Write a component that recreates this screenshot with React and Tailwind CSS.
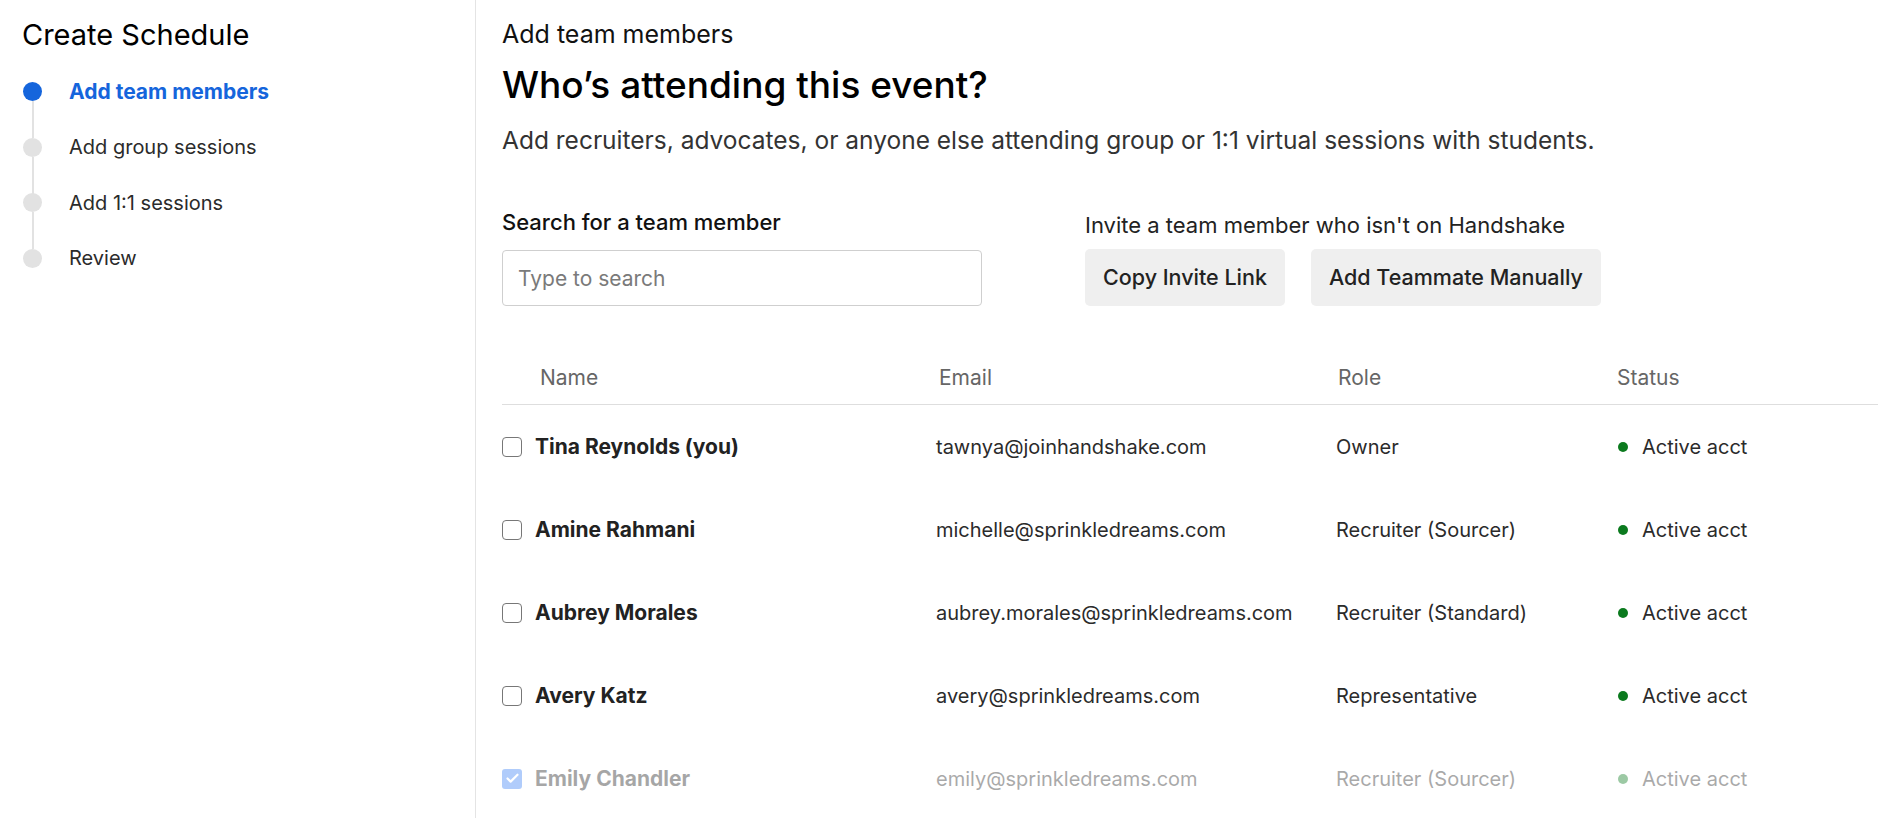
import { Check } from "lucide-react";

const steps = [
  { label: "Add team members", active: true },
  { label: "Add group sessions" },
  { label: "Add 1:1 sessions" },
  { label: "Review" },
];

const members = [
  { name: "Tina Reynolds (you)", email: "tawnya@joinhandshake.com", role: "Owner" },
  { name: "Amine Rahmani", email: "michelle@sprinkledreams.com", role: "Recruiter (Sourcer)" },
  { name: "Aubrey Morales", email: "aubrey.morales@sprinkledreams.com", role: "Recruiter (Standard)" },
  { name: "Avery Katz", email: "avery@sprinkledreams.com", role: "Representative" },
  { name: "Emily Chandler", email: "emily@sprinkledreams.com", role: "Recruiter (Sourcer)", added: true },
];

function Stepper() {
  return (
    <ol className="mt-[10px] pl-[23px]">
      {steps.map((s, i) => (
        <li key={s.label} className="flex h-[55.5px] items-center">
          <div className="relative flex w-[46px] shrink-0 items-center">
            <span
              className={`h-[19px] w-[19px] rounded-full ${s.active ? "bg-[#1565dc]" : "bg-[#e2e2e2]"}`}
            />
            {i < steps.length - 1 && (
              <span className="absolute left-[8.5px] top-[19px] h-[37px] w-[2px] bg-[#e2e2e2]" />
            )}
          </div>
          <span
            className={s.active ? "text-[21px] font-bold text-[#1565dc]" : "text-[20px] text-[#2b2b2b]"}
          >
            {s.label}
          </span>
        </li>
      ))}
    </ol>
  );
}

function Row({ m }) {
  return (
    <div
      className={`grid h-[83px] grid-cols-[434px_400px_281px_1fr] items-center text-[20px] ${m.added ? "opacity-40" : ""}`}
    >
      <div className="flex items-center gap-[13px]">
        {m.added ? (
          <span className="grid h-[20px] w-[20px] place-items-center rounded-[3px] bg-[#3b82f6]">
            <Check className="h-[15px] w-[15px] text-white" strokeWidth={3.5} />
          </span>
        ) : (
          <span className="h-[20px] w-[20px] rounded-[4px] border-[1.5px] border-[#777]" />
        )}
        <span className="text-[21px] font-bold text-[#222]">{m.name}</span>
      </div>
      <div className="text-[#2b2b2b]">{m.email}</div>
      <div className="text-[#2b2b2b]">{m.role}</div>
      <div className="flex items-center gap-[14px] pl-[1px] text-[#2b2b2b]">
        <span className="h-[10px] w-[10px] rounded-full bg-[#0b7a1e]" />
        Active acct
      </div>
    </div>
  );
}

export default function App() {
  return (
    <div
      className="flex h-[818px] w-full overflow-hidden bg-white text-[#111]"
      style={{ fontFamily: "Inter, 'Liberation Sans', sans-serif" }}
    >
      {/* Sidebar */}
      <aside className="w-[476px] shrink-0 border-r border-[#e4e4e4]">
        <h1 className="pl-[22px] pt-[16px] text-[29px] leading-[38px] text-black">Create Schedule</h1>
        <Stepper />
      </aside>

      {/* Main */}
      <main className="flex-1 pl-[26px] pr-[20px]">
        <div className="pt-[19px] text-[25px] leading-[30px] text-[#111]">Add team members</div>
        <h2 className="mt-[14px] text-[37px] font-medium leading-[44px] text-black">
          Who’s attending this event?
        </h2>
        <p className="mt-[18px] text-[24.5px] leading-[30px] text-[#333]">
          Add recruiters, advocates, or anyone else attending group or 1:1 virtual sessions with students.
        </p>

        <div className="mt-[53px] flex items-start gap-[103px]">
          <div>
            <label className="block text-[22px] font-medium leading-[28px] text-[#111]">
              Search for a team member
            </label>
            <input
              type="text"
              placeholder="Type to search"
              className="mt-[14px] h-[56px] w-[480px] rounded-[4px] border border-[#cfcfcf] px-[15px] text-[21px] text-[#222] outline-none placeholder:text-[#7a7a7a]"
            />
          </div>
          <div className="pt-[3px]">
            <div className="text-[22px] leading-[28px] text-[#222]">
              Invite a team member who isn't on Handshake
            </div>
            <div className="mt-[10px] flex gap-[26px]">
              <button className="h-[57px] rounded-[5px] bg-[#efefef] px-[18px] text-[21.5px] font-medium text-[#222]">
                Copy Invite Link
              </button>
              <button className="h-[57px] rounded-[5px] bg-[#efefef] px-[18px] text-[21.5px] font-medium text-[#222]">
                Add Teammate Manually
              </button>
            </div>
          </div>
        </div>

        {/* Table */}
        <div className="mt-[58px]">
          <div className="grid grid-cols-[434px_400px_281px_1fr] border-b border-[#dedede] pb-[12px] text-[21px] leading-[28px] text-[#666]">
            <span className="pl-[38px]">Name</span>
            <span className="pl-[3px]">Email</span>
            <span className="pl-[2px]">Role</span>
            <span>Status</span>
          </div>
          {members.map((m) => (
            <Row key={m.name} m={m} />
          ))}
        </div>
      </main>
    </div>
  );
}
